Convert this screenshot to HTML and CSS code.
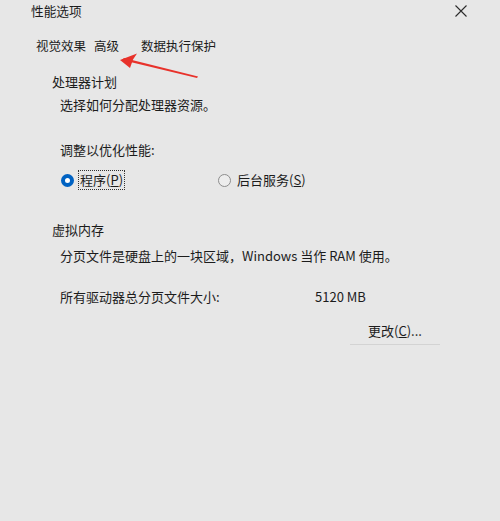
FILE: index.html
```html
<!DOCTYPE html>
<html lang="zh-CN">
  <head>
    <meta charset="UTF-8" />
    <meta name="viewport" content="width=device-width, initial-scale=1.0" />
    <title>性能选项</title>
    <link rel="stylesheet" href="styles.css">
  </head>
  <body>
    <div class="dialog">
      <div class="titlebar">
        <span class="title">性能选项</span>
        <span class="close">
          <svg width="12" height="12" viewBox="0 0 12 12">
            <path d="M0.5 0.5 L11.5 11.5 M11.5 0.5 L0.5 11.5" stroke="#2b2b2b" stroke-width="1.1" fill="none" />
          </svg>
        </span>
      </div>
      <div class="tabs">
        <span class="tab tab-visual">视觉效果</span>
        <span class="tab tab-advanced">高级</span>
        <span class="tab tab-dep">数据执行保护</span>
      </div>

      <div class="group">
        <div class="group-title first">处理器计划</div>
        <div class="desc">选择如何分配处理器资源。</div>
        <div class="sub-label">调整以优化性能:</div>
        <div class="radios">
          <label class="radio-item">
            <span class="radio checked"></span>
            <span class="radio-text focus">程序(<u>P</u>)</span>
          </label>
          <label class="radio-item second">
            <span class="radio"></span>
            <span class="radio-text">后台服务(<u>S</u>)</span>
          </label>
        </div>

        <div class="group-title vm">虚拟内存</div>
        <div class="desc vm-desc">分页文件是硬盘上的一块区域，Windows 当作 RAM 使用。</div>
        <div class="size-row">
          <span class="size-label">所有驱动器总分页文件大小:</span>
          <span class="size-value">5120 MB</span>
        </div>
        <div class="button-row">
          <button class="change">更改(<u>C</u>)...</button>
        </div>
      </div>

      <svg class="arrow" width="90" height="30" viewBox="0 0 90 30">
        <path d="M3 9 L78 27 L79 25.5 L5 7 Z" fill="#e8322b" />
        <path d="M1 9 L18 2.5 L14 8.5 L11 17 Z" fill="#e8322b" />
      </svg>
    </div>
  </body>
</html>
```

FILE: styles.css
```css
body {
  margin: 0;
  background-color: #e7e7e7;
  font-family: 'Noto Sans CJK SC', 'Noto Sans', sans-serif;
  font-size: 13px;
  color: #1c1c1c;
}

.dialog {
  position: relative;
  width: 500px;
  height: 521px;
}

.titlebar {
  display: flex;
  justify-content: space-between;
  align-items: center;
  height: 22px;
  padding-left: 31px;
  padding-right: 33px;
}

.title {
  line-height: 22px;
  font-size: 12.7px;
}

.close {
  display: flex;
  margin-top: -1px;
}

.tabs {
  display: flex;
  margin-top: 13px;
  padding-left: 36px;
  height: 22px;
  line-height: 22px;
  font-size: 12.5px;
}

.tab-advanced {
  margin-left: 8px;
}

.tab-dep {
  margin-left: 22px;
}

.group {
  padding-left: 52px;
  padding-right: 60px;
}

.group-title,
.desc,
.sub-label,
.size-row {
  line-height: 20px;
  height: 20px;
}

.group-title.first {
  margin-top: 15px;
}

.desc {
  padding-left: 8px;
  margin-top: 3px;
}

.sub-label {
  padding-left: 8px;
  margin-top: 25px;
}

.radios {
  display: flex;
  margin-top: 10px;
  padding-left: 9px;
  height: 20px;
}

.radio-item {
  display: flex;
  align-items: center;
  gap: 4px;
}

.radio-item.second {
  margin-left: 93px;
}

.radio {
  width: 13px;
  height: 13px;
  box-sizing: border-box;
  border-radius: 50%;
  border: 1px solid #8d8d8d;
  background-color: #ededed;
}

.radio.checked {
  border: 4px solid #0062c2;
  background-color: #ffffff;
}

.radio-text {
  line-height: 18px;
  padding: 0 1px;
  border: 1px solid transparent;
}

.radio-text.focus {
  border: 1px dotted #333;
}

.group-title.vm {
  margin-top: 30px;
}

.desc.vm-desc {
  margin-top: 6px;
}

.size-row {
  display: flex;
  padding-left: 8px;
  margin-top: 21px;
}

.size-label {
  width: 255px;
}

.button-row {
  display: flex;
  margin-top: 11px;
  padding-left: 298px;
}

.change {
  width: 90px;
  height: 27px;
  font-family: inherit;
  font-size: 13px;
  color: #1c1c1c;
  background-color: #e7e7e7;
  border: none;
  border-bottom: 1px solid #d3d3d3;
  padding: 0 0 2px;
}

.arrow {
  position: absolute;
  left: 119px;
  top: 51px;
}
```
